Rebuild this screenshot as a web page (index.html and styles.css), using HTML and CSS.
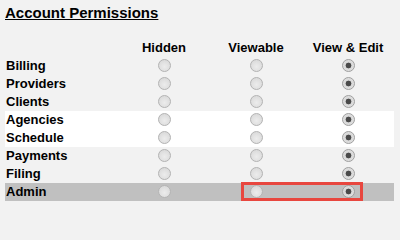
FILE: index.html
```html
<!DOCTYPE html>
<html>
<head>
<meta charset="utf-8">
<link rel="stylesheet" href="styles.css">
</head>
<body>
<div class="page">
  <h1 class="title">Account Permissions</h1>
  <table class="perms">
    <colgroup>
      <col class="c-label"><col class="c-opt"><col class="c-opt"><col class="c-opt">
    </colgroup>
    <thead>
      <tr class="head"><th></th><th>Hidden</th><th>Viewable</th><th>View &amp; Edit</th></tr>
    </thead>
    <tbody>
      <tr><td class="label">Billing</td><td><span class="radio"></span></td><td><span class="radio"></span></td><td><span class="radio on"></span></td></tr>
      <tr><td class="label">Providers</td><td><span class="radio"></span></td><td><span class="radio"></span></td><td><span class="radio on"></span></td></tr>
      <tr><td class="label">Clients</td><td><span class="radio"></span></td><td><span class="radio"></span></td><td><span class="radio on"></span></td></tr>
      <tr class="white"><td class="label">Agencies</td><td><span class="radio"></span></td><td><span class="radio"></span></td><td><span class="radio on"></span></td></tr>
      <tr class="white"><td class="label">Schedule</td><td><span class="radio"></span></td><td><span class="radio"></span></td><td><span class="radio on"></span></td></tr>
      <tr><td class="label">Payments</td><td><span class="radio"></span></td><td><span class="radio"></span></td><td><span class="radio on"></span></td></tr>
      <tr><td class="label">Filing</td><td><span class="radio"></span></td><td><span class="radio"></span></td><td><span class="radio on"></span></td></tr>
      <tr class="selected"><td class="label">Admin</td><td><span class="radio"></span></td><td class="mark-cell"><span class="highlight"></span><span class="radio"></span></td><td><span class="radio on"></span></td></tr>
    </tbody>
  </table>
</div>
</body>
</html>
```

FILE: styles.css
```css
html, body {
  margin: 0;
  padding: 0;
  background: #f2f2f2;
}
body {
  font-family: "Liberation Sans", Arial, sans-serif;
  color: #000;
  width: 400px;
  height: 208px;
  overflow: hidden;
}
.page {
  padding: 4px 0 0 5px;
}
.title {
  margin: 0 0 18px 0;
  font-size: 15px;
  font-weight: bold;
  line-height: 17px;
  text-decoration: underline;
}
.perms {
  border-collapse: collapse;
  border-spacing: 0;
  table-layout: fixed;
  width: 389px;
}
.c-label { width: 113px; }
.c-opt { width: 92px; }
.perms th, .perms td {
  padding: 0;
  height: 18px;
  line-height: 18px;
  font-size: 13px;
  font-weight: bold;
  text-align: center;
  vertical-align: middle;
}
.perms td.label {
  text-align: left;
  padding-left: 1px;
}
.white td { background: #fff; }
.selected td { background: #c0c0c0; }
.radio {
  display: inline-block;
  box-sizing: border-box;
  width: 13px;
  height: 13px;
  border-radius: 50%;
  border: 1px solid #b4b4b4;
  background: radial-gradient(circle at 50% 60%, #ececec 0, #dcdcdc 70%, #d2d2d2 100%);
  vertical-align: middle;
  position: relative;
  top: -1px;
}
.radio.on {
  background: radial-gradient(circle, #4a4a4a 0, #4a4a4a 2.6px, #d8d8d8 3.2px, #e6e6e6 100%);
  border-color: #a0a0a0;
}
.mark-cell { position: relative; }
.highlight {
  position: absolute;
  left: 31px;
  top: -1px;
  width: 122px;
  height: 19px;
  box-sizing: border-box;
  border: 3px solid #e8473f;
}
```
